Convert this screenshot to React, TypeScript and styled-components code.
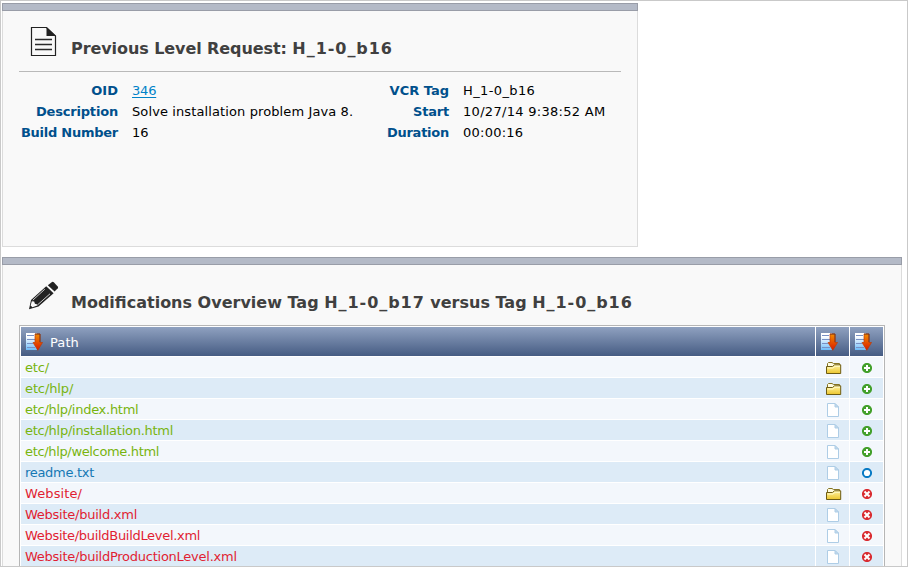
import React from "react";
import styled, { createGlobalStyle } from "styled-components";

const GlobalStyle = createGlobalStyle`
  * { box-sizing: border-box; }
  body { margin: 0; background: #fff; font-family: Verdana, "DejaVu Sans", sans-serif; font-size: 13px; color: #000; overflow: hidden; }
  svg { display: block; }
`;

const Frame = styled.main`
  width: 908px;
  height: 567px;
  overflow: hidden;
  border: 1px solid #c9c9c9;
  padding: 2px 1px 0;
  background: #fff;
`;

const Panel = styled.section<{ $width: number; $height: number }>`
  width: ${(p) => p.$width}px;
  height: ${(p) => p.$height}px;
  margin-bottom: 10px;
  border: 1px solid #dcdcdc;
  border-top: 0;
  background: #f9f9f9;
`;

const PanelBar = styled.div`
  height: 8px;
  margin: 0 -1px;
  background: #b4bac7;
  border: 1px solid #999da8;
`;

const PanelHead = styled.header<{ $height: number; $ruled?: boolean }>`
  display: flex;
  height: ${(p) => p.$height}px;
  margin: 0 16px;
  padding: 15px 0 0 9px;
  border-bottom: ${(p) => (p.$ruled ? "1px solid #b9b9b9" : "0")};
`;

const IconBox = styled.div`
  width: 43px;
  flex: none;
`;

const Title = styled.h1<{ $spacing: number }>`
  margin: 12px 0 0;
  font-size: 16px;
  line-height: 22px;
  font-weight: bold;
  letter-spacing: ${(p) => p.$spacing}px;
  color: #404040;
  white-space: nowrap;
`;

const TagName = styled.span`
  letter-spacing: 0.95px;
`;

const Details = styled.dl`
  display: grid;
  grid-template-columns: 99px 231px 100px 174px;
  grid-auto-rows: 21px;
  margin: 8px 0 0 16px;
  line-height: 21px;
  white-space: nowrap;
`;

const Label = styled.dt<{ $spacing?: number }>`
  text-align: right;
  font-weight: bold;
  color: #00508c;
  letter-spacing: ${(p) => p.$spacing ?? 0}px;
`;

const Value = styled.dd<{ $spacing?: number }>`
  margin: 0 0 0 14px;
  letter-spacing: ${(p) => p.$spacing ?? 0}px;
`;

const Link = styled.a`
  color: #0082c8;
  text-decoration: underline;
  text-underline-offset: 2px;
`;

const Table = styled.div`
  width: 866px;
  margin-left: 16px;
  padding: 1px;
  border: 1px solid #b6b6b6;
  background: #fff;
`;

const Row = styled.div`
  display: grid;
  grid-template-columns: 794px 33px 33px;
  column-gap: 1px;
  margin-bottom: 1px;
`;

const HeadCell = styled.div`
  display: flex;
  align-items: center;
  height: 29px;
  padding: 1px 0 0 5px;
  gap: 7px;
  letter-spacing: 0.1px;
  color: #fff;
  background: linear-gradient(#8fa1c0, #465c83);
`;

const Cell = styled.div<{ $even: boolean; $color?: string; $spacing?: number }>`
  height: 20px;
  padding-left: 4px;
  line-height: 21px;
  color: ${(p) => p.$color};
  letter-spacing: ${(p) => p.$spacing ?? 0}px;
  background: ${(p) => (p.$even ? "#ddebf7" : "#f3f7fc")};
`;

const IconCell = styled(Cell)`
  display: flex;
  align-items: center;
  justify-content: center;
  padding: 2px 0 0 1px;
`;

const FolderSvg = styled.svg`
  margin: 1px 0 0 2px;
`;

const DocumentIcon = () => (
  <svg width="30" height="31" viewBox="0 0 30 31">
    <path d="M3.5 1.5H18.5L27.5 10V29.5H3.5Z" fill="#f9f9f9" stroke="#222" strokeWidth="1.2" />
    <path d="M18.5 1L28 10H18.5Z" fill="#222" />
    <path d="M7 13.5H24M7 18.5H24M7 23.5H24" stroke="#2a2a2a" strokeWidth="1.3" />
  </svg>
);

const PencilIcon = () => (
  <svg width="31" height="31" viewBox="0 0 31 31">
    <path d="M19.8 5.2L24 2Q25 1.6 25.8 2.3L29.7 6.4Q30.5 7.4 29.8 8.2L26.6 11.6Z" fill="#222" />
    <path d="M18.2 6.2L25.6 13.2L10.5 26.5L1 29.2L3 20Z" fill="#222" />
    <path d="M16.8 9.2L4.8 20.2M22 13.8L9.6 24.8" stroke="#f9f9f9" strokeWidth=".8" />
    <path d="M3.8 21.2L6.2 21.4L6.9 23.8L9.4 24.4L9.3 25.6L4.4 27.2L2.6 25.4Z" fill="#f9f9f9" />
  </svg>
);

const SortIcon = () => (
  <svg width="17" height="18" viewBox="0 0 17 18">
    <defs>
      <linearGradient id="page" x1="0" y1="0" x2="0" y2="1"><stop offset=".2" stopColor="#fff" /><stop offset="1" stopColor="#6cbcfa" /></linearGradient>
      <linearGradient id="arrow" x1="0" y1="0" x2="0" y2="1"><stop stopColor="#f28c00" /><stop offset="1" stopColor="#d81800" /></linearGradient>
    </defs>
    <path d="M0 0H11V17H0Z" fill="url(#page)" />
    <path d="M1 2.5H8M1 6.5H9M1 10.5H7M1 14.5H9" stroke="#7890c4" strokeWidth="1" />
    <path d="M9 1H14V9.5H16.5L11.8 17.3L7 9.5H9Z" fill="url(#arrow)" stroke="#bf3905" strokeWidth=".7" />
    <path d="M9 1H14V9" fill="none" stroke="#75391f" strokeWidth=".9" />
  </svg>
);

const FolderIcon = () => (
  <FolderSvg width="16" height="13" viewBox="0 0 16 13">
    <defs>
      <linearGradient id="folder" x1="0" y1="0" x2="0" y2="1"><stop stopColor="#fff3a0" /><stop offset="1" stopColor="#ecc62e" /></linearGradient>
    </defs>
    <path d="M1.5 4.5V1.5L2.5 .5H6L7.5 1.5H13.5V4" fill="#fffce2" stroke="#857423" />
    <path d="M.5 4.5H6.5L8.5 2.8H14.7V11.5H.5Z" fill="url(#folder)" stroke="#6d5c14" />
    <path d="M1.5 6H7L9 4.3H14" stroke="#fffbd0" strokeWidth=".9" fill="none" />
  </FolderSvg>
);

const FileIcon = () => (
  <svg width="12" height="14" viewBox="0 0 12 14">
    <path d="M.5 .5H8L11.5 4V13.5H.5Z" fill="#fff" stroke="#aecde6" />
    <path d="M8 .5V4H11.5Z" fill="#c3daec" stroke="#aecde6" />
  </svg>
);

type Status = "added" | "changed" | "removed";

const StatusIcon = ({ status }: { status: Status }) => (
  <svg width="10" height="10" viewBox="0 0 10 10">
    {status === "added" && <><circle cx="5" cy="5" r="5.1" fill="#43a02b" /><path d="M5 2V8M2 5H8" stroke="#fff" strokeWidth="2" /></>}
    {status === "changed" && <circle cx="5" cy="5" r="4.1" fill="#fff" stroke="#087ac4" strokeWidth="2" />}
    {status === "removed" && <><circle cx="5" cy="5" r="5.1" fill="#d92b30" /><path d="M2.5 2.5L7.5 7.5M7.5 2.5L2.5 7.5" stroke="#fff" strokeWidth="2" /></>}
  </svg>
);

const statusColors: Record<Status, string> = { added: "#78b40f", changed: "#1478b4", removed: "#e11e32" };

const files: { path: string; status: Status; spacing: number }[] = [
  { path: "etc/", status: "added", spacing: -0.15 },
  { path: "etc/hlp/", status: "added", spacing: -0.12 },
  { path: "etc/hlp/index.html", status: "added", spacing: -0.28 },
  { path: "etc/hlp/installation.html", status: "added", spacing: -0.26 },
  { path: "etc/hlp/welcome.html", status: "added", spacing: -0.34 },
  { path: "readme.txt", status: "changed", spacing: -0.3 },
  { path: "Website/", status: "removed", spacing: 0.1 },
  { path: "Website/build.xml", status: "removed", spacing: -0.25 },
  { path: "Website/buildBuildLevel.xml", status: "removed", spacing: -0.3 },
  { path: "Website/buildProductionLevel.xml", status: "removed", spacing: -0.25 },
];

export default function App() {
  return (
    <>
      <GlobalStyle />
      <Frame>
        <Panel $width={636} $height={244}>
          <PanelBar />
          <PanelHead $height={61} $ruled>
            <IconBox><DocumentIcon /></IconBox>
            <Title $spacing={-0.08}>Previous Level Request: <TagName>H_1-0_b16</TagName></Title>
          </PanelHead>
          <Details>
            <Label>OID</Label><Value $spacing={-0.2}><Link>346</Link></Value>
            <Label>VCR Tag</Label><Value $spacing={0.38}>H_1-0_b16</Value>
            <Label $spacing={-0.18}>Description</Label><Value $spacing={0.11}>Solve installation problem Java 8.</Value>
            <Label $spacing={-0.2}>Start</Label><Value $spacing={0.3}>10/27/14 9:38:52 AM</Value>
            <Label $spacing={-0.25}>Build Number</Label><Value>16</Value>
            <Label $spacing={-0.25}>Duration</Label><Value $spacing={0.25}>00:00:16</Value>
          </Details>
        </Panel>
        <Panel $width={900} $height={330}>
          <PanelBar />
          <PanelHead $height={60}>
            <IconBox><PencilIcon /></IconBox>
            <Title $spacing={0}>
              Modifications Overview Tag <TagName>H_1-0_b17</TagName> versus Tag <TagName>H_1-0_b16</TagName>
            </Title>
          </PanelHead>
          <Table>
            <Row>
              <HeadCell><SortIcon />Path</HeadCell>
              <HeadCell><SortIcon /></HeadCell>
              <HeadCell><SortIcon /></HeadCell>
            </Row>
            {files.map((f, i) => (
              <Row key={f.path}>
                <Cell $even={i % 2 === 1} $color={statusColors[f.status]} $spacing={f.spacing}>{f.path}</Cell>
                <IconCell $even={i % 2 === 1}>{f.path.endsWith("/") ? <FolderIcon /> : <FileIcon />}</IconCell>
                <IconCell $even={i % 2 === 1}><StatusIcon status={f.status} /></IconCell>
              </Row>
            ))}
          </Table>
        </Panel>
      </Frame>
    </>
  );
}
